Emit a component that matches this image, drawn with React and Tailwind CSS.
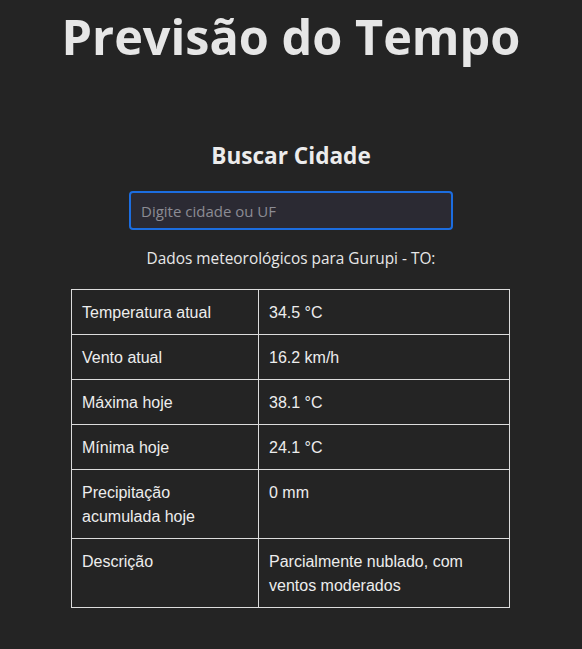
import React, { useState } from "react";

const dados = [
  ["Temperatura atual", "34.5 °C"],
  ["Vento atual", "16.2 km/h"],
  ["Máxima hoje", "38.1 °C"],
  ["Mínima hoje", "24.1 °C"],
  ["Precipitação acumulada hoje", "0 mm"],
  ["Descrição", "Parcialmente nublado, com ventos moderados"],
];

export default function App() {
  const [cidade, setCidade] = useState("");

  return (
    <div className="min-h-screen bg-[#242424] text-[rgba(255,255,255,0.87)] flex flex-col items-center font-['Open_Sans',sans-serif]">
      {/* Titulo */}
      <h1 className="pt-[12px] text-[48.6px] leading-none font-bold text-[#e6e6e6]">
        Previsão do Tempo
      </h1>

      {/* Busca */}
      <h2 className="mt-[84px] text-[22.6px] leading-none font-bold text-[#ececec]">
        Buscar Cidade
      </h2>
      <input
        type="text"
        value={cidade}
        onChange={(e) => setCidade(e.target.value)}
        placeholder="Digite cidade ou UF"
        className="mt-[24px] w-[324px] h-[39px] rounded-[4px] border-2 border-[#1c6de0] bg-[#2b2a33] px-[10px] text-[15px] text-white placeholder:text-[#8c8c94] outline-none"
      />

      <p className="mt-[21px] text-[15.4px] leading-none text-[#e8e8e8]">
        Dados meteorológicos para Gurupi - TO:
      </p>

      {/* Tabela */}
      <table className="mt-[22px] mr-[1px] w-[439px] border-collapse font-['Liberation_Sans',Arial,sans-serif] text-[16px] leading-[24px] text-[#ededed]">
        <tbody>
          {dados.map(([nome, valor]) => (
            <tr key={nome}>
              <td className="w-[187px] border border-[#dcdcdc] pt-[11px] pb-[9px] px-[10px] align-top">
                {nome}
              </td>
              <td className="border border-[#dcdcdc] pt-[11px] pb-[9px] px-[10px] align-top">
                {valor}
              </td>
            </tr>
          ))}
        </tbody>
      </table>
    </div>
  );
}
